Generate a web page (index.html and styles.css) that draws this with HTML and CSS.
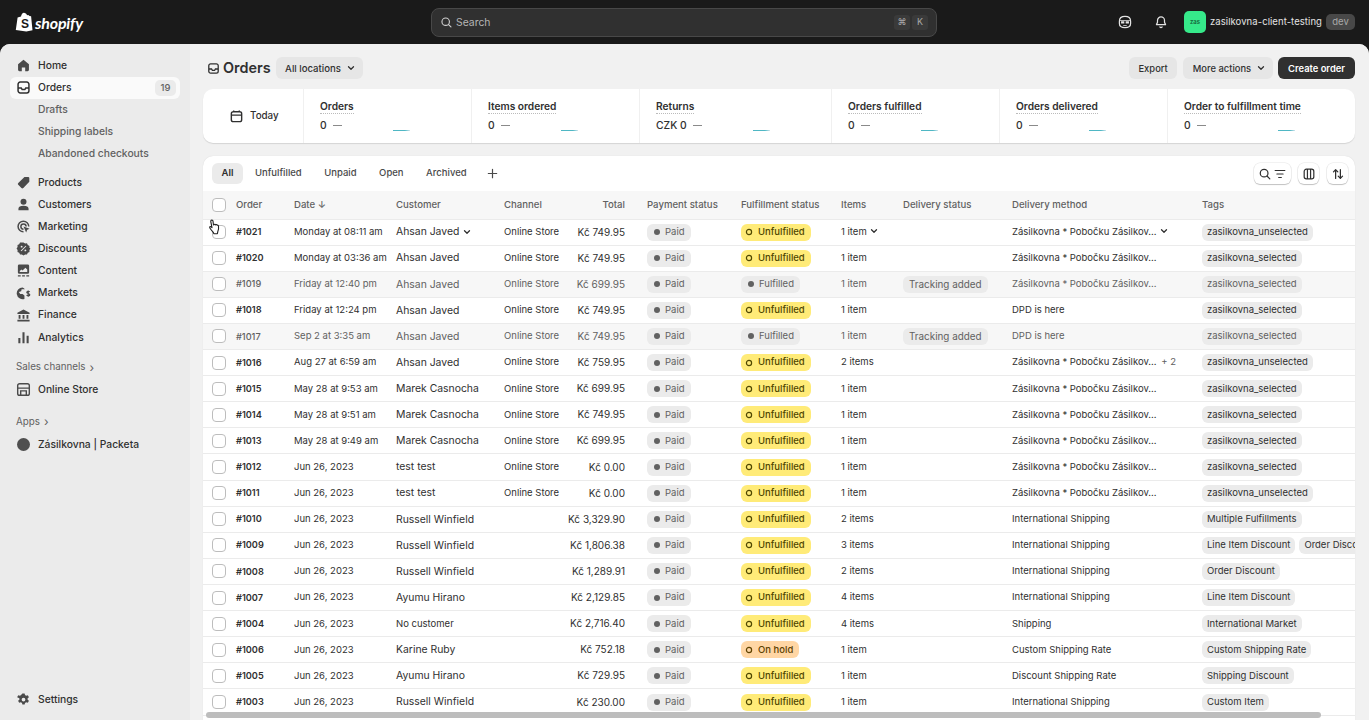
FILE: index.html
```html
<!DOCTYPE html>
<html lang="en">
<head>
<meta charset="utf-8">
<title>Orders</title>
<link rel="stylesheet" href="styles.css">
</head>
<body>
<svg class="defs" width="0" height="0" aria-hidden="true">
  <symbol id="i-inbox" viewBox="0 0 16 16"><path fill="none" stroke="currentColor" stroke-width="1.6" d="M4.5 2.2h7a2.3 2.3 0 0 1 2.3 2.3v7a2.3 2.3 0 0 1-2.3 2.3h-7a2.3 2.3 0 0 1-2.3-2.3v-7a2.3 2.3 0 0 1 2.3-2.3zM2.4 8.6h3.2l1 1.6h2.8l1-1.6h3.2"/></symbol>
  <symbol id="i-chev" viewBox="0 0 10 10"><path fill="none" stroke="currentColor" stroke-width="1.3" stroke-linecap="round" stroke-linejoin="round" d="M2.5 3.8 5 6.3l2.5-2.5"/></symbol>
  <symbol id="i-ring" viewBox="0 0 10 10"><circle cx="5" cy="5" r="2.6" fill="none" stroke="currentColor" stroke-width="1.2"/></symbol>
</svg>

<header class="topbar">
  <div class="brand">
    <svg class="bag" viewBox="0 0 18 20"><path fill="#fff" d="M2.600 5.400 6 4.400C6.400 2.400 7.600.8 9 .8c.5 0 .9.2 1.200.5 1 .1 1.500 1 1.800 1.900l1.100-.3.2 0 1.200 1.100 1.600.2 1.400 14-6.200 1.300L.8 18z"/><text x="6" y="15.500" class="bag-s">S</text></svg>
    <span class="wordmark">shopify</span>
  </div>
  <div class="search">
    <svg class="search-icon" viewBox="0 0 16 16"><circle cx="7" cy="7" r="4.600" fill="none" stroke="currentColor" stroke-width="1.400"/><path stroke="currentColor" stroke-width="1.400" stroke-linecap="round" d="m10.500 10.500 3 3"/></svg>
    <span class="search-label">Search</span>
    <span class="key">⌘</span><span class="key">K</span>
  </div>
  <div class="top-right">
    <svg class="top-icon" viewBox="0 0 16 16"><path fill="none" stroke="currentColor" stroke-width="1.400" d="M8 1.600c3.600 0 6.400 1.800 6.400 5.400v2.600c0 3-2.800 4.800-6.400 4.800s-6.400-1.800-6.400-4.800V7c0-3.600 2.800-5.400 6.400-5.400z"/><path fill="currentColor" d="M1.800 5.600h12.400v1.100H1.800zM3.500 7.200h3.700v2.600H3.500zM8.800 7.200h3.700v2.600H8.800zM6 11.300h4v1.100H6z"/></svg>
    <svg class="top-icon bell" viewBox="0 0 16 16"><path fill="none" stroke="currentColor" stroke-width="1.400" stroke-linejoin="round" d="M8 2.200a4 4 0 0 0-4 4v2.200L2.800 11h10.400L12 8.400V6.200a4 4 0 0 0-4-4zM6.400 13.200a1.700 1.700 0 0 0 3.200 0"/></svg>
    <span class="avatar">zas</span>
    <span class="store-name">zasilkovna-client-testing</span>
    <span class="dev">dev</span>
  </div>
</header>

<div class="frame">
  <nav class="sidebar">
    <a class="nav-item"><svg class="nav-icon" viewBox="0 0 16 16"><path fill="currentColor" d="M8 1.800 2.200 6.600v6a1.400 1.400 0 0 0 1.400 1.400h2.600v-4h3.600v4h2.600a1.400 1.400 0 0 0 1.400-1.400v-6z"/></svg>Home</a>
    <a class="nav-item active"><svg class="nav-icon dark"><use href="#i-inbox"/></svg>Orders<span class="count">19</span></a>
    <a class="nav-sub">Drafts</a>
    <a class="nav-sub">Shipping labels</a>
    <a class="nav-sub">Abandoned checkouts</a>
    <a class="nav-item gap"><svg class="nav-icon" viewBox="0 0 16 16"><path fill="currentColor" d="M9 2h4a1.200 1.200 0 0 1 1.200 1.200v4L7.800 13.800a1.400 1.400 0 0 1-2 0L2.400 10.400a1.400 1.400 0 0 1 0-2z"/></svg>Products</a>
    <a class="nav-item"><svg class="nav-icon" viewBox="0 0 16 16"><circle cx="8" cy="5" r="3.200" fill="currentColor"/><path fill="currentColor" d="M2.600 14v-1.400c0-2 2-3.200 5.400-3.200s5.400 1.200 5.400 3.200V14z"/></svg>Customers</a>
    <a class="nav-item"><svg class="nav-icon" viewBox="0 0 16 16"><path fill="none" stroke="currentColor" stroke-width="1.600" d="M13.600 8A5.700 5.700 0 1 0 8 13.700M10.800 8A2.800 2.800 0 1 0 8 10.800"/><path fill="currentColor" d="m8 8 6.500 2.300-2.500 1.200-1.200 2.800z"/></svg>Marketing</a>
    <a class="nav-item"><svg class="nav-icon" viewBox="0 0 16 16"><path fill="currentColor" fill-rule="evenodd" d="m8 1.500 1.700 1.100 2-.1.900 1.800 1.800.9-.1 2L15.400 8l-1.100 1.700.1 2-1.800.9-.9 1.800-2-.1L8 15.400l-1.700-1.100-2 .1-.9-1.800-1.800-.9.1-2L.6 8l1.100-1.700-.1-2 1.800-.9.9-1.800 2 .1zM6 5a1 1 0 1 0 0 2 1 1 0 0 0 0-2zm4 4a1 1 0 1 0 0 2 1 1 0 0 0 0-2zm.3-4L5 10.300l.8.7L11 5.700z"/></svg>Discounts</a>
    <a class="nav-item"><svg class="nav-icon" viewBox="0 0 16 16"><path fill="currentColor" fill-rule="evenodd" d="M3.500 1.500h9A1.500 1.500 0 0 1 14 3v7a1.500 1.500 0 0 1-1.500 1.500h-9A1.500 1.500 0 0 1 2 10V3a1.500 1.500 0 0 1 1.500-1.500zM4 8.500V9.500h8V7L10 5 7 8 5.800 7z"/><path fill="currentColor" d="M2 13h3v1.400H2zM6.500 13h3v1.400h-3zM11 13h3v1.400h-3z"/></svg>Content</a>
    <a class="nav-item"><svg class="nav-icon" viewBox="0 0 16 16"><path fill="currentColor" d="M7 1.500a6.300 6.300 0 1 0 2 12.300V10L7 8.500H4.500L3 6.500l2.500-1 .5-2h3.500A6.300 6.300 0 0 0 7 1.500z"/><path fill="none" stroke="currentColor" stroke-width="1.300" d="M14.500 6.500c-.5-1-2.800-1-3 .3-.2 1.400 3.200 1 3.200 2.600 0 1.300-2.700 1.400-3.400.2M13 4.800v6.600"/></svg>Markets</a>
    <a class="nav-item"><svg class="nav-icon" viewBox="0 0 16 16"><path fill="currentColor" d="M8 1.500 14.500 5v1.500h-13V5zM2.800 7.500h2v4h-2zM7 7.500h2v4H7zM11.200 7.500h2v4h-2zM1.500 12.500h13V14.500h-13z"/></svg>Finance</a>
    <a class="nav-item"><svg class="nav-icon" viewBox="0 0 16 16"><path fill="currentColor" d="M2.500 8.500h2.200V14H2.500zM6.900 2.500h2.200V14H6.900zM11.300 6h2.200v8h-2.200z"/></svg>Analytics</a>
    <div class="nav-head first">Sales channels <span class="caret">›</span></div>
    <a class="nav-item"><svg class="nav-icon" viewBox="0 0 16 16"><path fill="none" stroke="currentColor" stroke-width="1.500" d="M3.800 1.800h8.400a2 2 0 0 1 2 2v8.400a2 2 0 0 1-2 2H3.800a2 2 0 0 1-2-2V3.800a2 2 0 0 1 2-2zM2 6.500h12M5 14v-4.500h6V14"/></svg>Online Store</a>
    <div class="nav-head">Apps <span class="caret">›</span></div>
    <a class="nav-item"><span class="app-dot"></span>Zásilkovna | Packeta</a>
    <a class="nav-item settings"><svg class="nav-icon" viewBox="0 0 16 16"><path fill="currentColor" fill-rule="evenodd" d="M6.800 1.500h2.400l.4 1.800 1.200.7 1.800-.6 1.200 2.100-1.400 1.200v1.500l1.400 1.200-1.200 2.100-1.800-.6-1.200.7-.4 1.800H6.800l-.4-1.800-1.200-.7-1.800.6-1.200-2.100 1.400-1.200V6.700L1.200 5.500l1.200-2.100 1.800.6 1.200-.7zM8 6a2 2 0 1 0 0 4 2 2 0 0 0 0-4z"/></svg>Settings</a>
  </nav>

  <main class="content">
    <div class="page-head">
      <svg class="title-icon"><use href="#i-inbox"/></svg>
      <h1 class="title">Orders</h1>
      <button class="btn btn-grey loc">All locations <svg class="chev"><use href="#i-chev"/></svg></button>
      <span class="spacer"></span>
      <button class="btn btn-grey">Export</button>
      <button class="btn btn-grey more-btn">More actions <svg class="chev"><use href="#i-chev"/></svg></button>
      <button class="btn btn-dark">Create order</button>
    </div>

    <section class="stats">
      <div class="stat today">
        <svg class="cal" viewBox="0 0 16 16"><path fill="none" stroke="currentColor" stroke-width="1.500" d="M4.500 3h7A2 2 0 0 1 13.500 5v6.500a2 2 0 0 1-2 2h-7a2 2 0 0 1-2-2V5a2 2 0 0 1 2-2zM2.500 6.500h11M5 1.500V3M11 1.500V3"/></svg>
        <span>Today</span>
      </div>
      <div class="stat s168"><span class="stat-label">Orders</span><span class="stat-val">0 <i class="dash"></i></span><i class="spark"></i></div>
      <div class="stat s168"><span class="stat-label">Items ordered</span><span class="stat-val">0 <i class="dash"></i></span><i class="spark"></i></div>
      <div class="stat s192"><span class="stat-label">Returns</span><span class="stat-val">CZK 0 <i class="dash"></i></span><i class="spark"></i></div>
      <div class="stat s168"><span class="stat-label">Orders fulfilled</span><span class="stat-val">0 <i class="dash"></i></span><i class="spark"></i></div>
      <div class="stat s168"><span class="stat-label">Orders delivered</span><span class="stat-val">0 <i class="dash"></i></span><i class="spark"></i></div>
      <div class="stat s-last"><span class="stat-label">Order to fulfillment time</span><span class="stat-val">0 <i class="dash"></i></span><i class="spark"></i></div>
    </section>

    <section class="card">
      <div class="tabs">
        <span class="tab on">All</span>
        <span class="tab">Unfulfilled</span>
        <span class="tab">Unpaid</span>
        <span class="tab">Open</span>
        <span class="tab">Archived</span>
        <svg class="plus" viewBox="0 0 10 10"><path stroke="currentColor" stroke-width="1.100" stroke-linecap="round" d="M5 1.200v7.600M1.200 5h7.600"/></svg>
        <span class="spacer"></span>
        <span class="tool wide">
          <svg viewBox="0 0 16 16"><circle cx="7" cy="7" r="4.400" fill="none" stroke="currentColor" stroke-width="1.400"/><path stroke="currentColor" stroke-width="1.400" stroke-linecap="round" d="m10.300 10.300 3.200 3.200"/></svg>
          <svg viewBox="0 0 16 16"><path stroke="currentColor" stroke-width="1.400" stroke-linecap="round" d="M2.500 4h11M4.500 8h7M6.500 12h3"/></svg>
        </span>
        <span class="tool">
          <svg viewBox="0 0 16 16"><path fill="none" stroke="currentColor" stroke-width="1.400" d="M5 2.500h6A2.500 2.500 0 0 1 13.500 5v6a2.500 2.500 0 0 1-2.500 2.500H5A2.500 2.500 0 0 1 2.500 11V5A2.500 2.500 0 0 1 5 2.500zM6.200 2.500v11M9.800 2.500v11"/></svg>
        </span>
        <span class="tool">
          <svg viewBox="0 0 16 16"><path fill="none" stroke="currentColor" stroke-width="1.400" stroke-linecap="round" stroke-linejoin="round" d="M5.300 13V3M2.800 5.500l2.500-2.500 2.500 2.500M10.700 3v10M8.200 10.500l2.500 2.500 2.500-2.500"/></svg>
        </span>
      </div>

      <div class="row head">
        <span class="c-check"><i class="box"></i></span><span>Order</span><span>Date ↓</span><span>Customer</span><span>Channel</span><span class="total">Total</span><span>Payment status</span><span>Fulfillment status</span><span>Items</span><span>Delivery status</span><span>Delivery method</span><span>Tags</span>
      </div>

      <div class="row"><span class="c-check"><i class="box"></i></span><b>#1021</b><span>Monday at 08:11 am</span><span class="cust">Ahsan Javed <svg class="chev"><use href="#i-chev"/></svg></span><span>Online Store</span><span class="total">Kč 749.95</span><span><i class="pill grey"><i class="dot"></i>Paid</i></span><span><i class="pill yellow"><svg class="ring"><use href="#i-ring"/></svg>Unfulfilled</i></span><span>1 item <svg class="chev"><use href="#i-chev"/></svg></span><span></span><span>Zásilkovna * Pobočku Zásilkov... <svg class="chev"><use href="#i-chev"/></svg></span><span class="tags"><i class="tag">zasilkovna_unselected</i></span></div>

      <div class="row"><span class="c-check"><i class="box"></i></span><b>#1020</b><span>Monday at 03:36 am</span><span class="cust">Ahsan Javed</span><span>Online Store</span><span class="total">Kč 749.95</span><span><i class="pill grey"><i class="dot"></i>Paid</i></span><span><i class="pill yellow"><svg class="ring"><use href="#i-ring"/></svg>Unfulfilled</i></span><span>1 item</span><span></span><span>Zásilkovna * Pobočku Zásilkov...</span><span class="tags"><i class="tag">zasilkovna_selected</i></span></div>

      <div class="row muted"><span class="c-check"><i class="box"></i></span><b>#1019</b><span>Friday at 12:40 pm</span><span class="cust">Ahsan Javed</span><span>Online Store</span><span class="total">Kč 699.95</span><span><i class="pill grey"><i class="dot"></i>Paid</i></span><span><i class="pill grey"><i class="dot"></i>Fulfilled</i></span><span>1 item</span><span><i class="tag">Tracking added</i></span><span>Zásilkovna * Pobočku Zásilkov...</span><span class="tags"><i class="tag">zasilkovna_selected</i></span></div>

      <div class="row"><span class="c-check"><i class="box"></i></span><b>#1018</b><span>Friday at 12:24 pm</span><span class="cust">Ahsan Javed</span><span>Online Store</span><span class="total">Kč 749.95</span><span><i class="pill grey"><i class="dot"></i>Paid</i></span><span><i class="pill yellow"><svg class="ring"><use href="#i-ring"/></svg>Unfulfilled</i></span><span>1 item</span><span></span><span>DPD is here</span><span class="tags"><i class="tag">zasilkovna_selected</i></span></div>

      <div class="row muted"><span class="c-check"><i class="box"></i></span><b>#1017</b><span>Sep 2 at 3:35 am</span><span class="cust">Ahsan Javed</span><span>Online Store</span><span class="total">Kč 749.95</span><span><i class="pill grey"><i class="dot"></i>Paid</i></span><span><i class="pill grey"><i class="dot"></i>Fulfilled</i></span><span>1 item</span><span><i class="tag">Tracking added</i></span><span>DPD is here</span><span class="tags"><i class="tag">zasilkovna_selected</i></span></div>

      <div class="row"><span class="c-check"><i class="box"></i></span><b>#1016</b><span>Aug 27 at 6:59 am</span><span class="cust">Ahsan Javed</span><span>Online Store</span><span class="total">Kč 759.95</span><span><i class="pill grey"><i class="dot"></i>Paid</i></span><span><i class="pill yellow"><svg class="ring"><use href="#i-ring"/></svg>Unfulfilled</i></span><span>2 items</span><span></span><span>Zásilkovna * Pobočku Zásilkov... <i class="more">+ 2</i></span><span class="tags"><i class="tag">zasilkovna_unselected</i></span></div>

      <div class="row"><span class="c-check"><i class="box"></i></span><b>#1015</b><span>May 28 at 9:53 am</span><span class="cust">Marek Casnocha</span><span>Online Store</span><span class="total">Kč 699.95</span><span><i class="pill grey"><i class="dot"></i>Paid</i></span><span><i class="pill yellow"><svg class="ring"><use href="#i-ring"/></svg>Unfulfilled</i></span><span>1 item</span><span></span><span>Zásilkovna * Pobočku Zásilkov...</span><span class="tags"><i class="tag">zasilkovna_selected</i></span></div>

      <div class="row"><span class="c-check"><i class="box"></i></span><b>#1014</b><span>May 28 at 9:51 am</span><span class="cust">Marek Casnocha</span><span>Online Store</span><span class="total">Kč 749.95</span><span><i class="pill grey"><i class="dot"></i>Paid</i></span><span><i class="pill yellow"><svg class="ring"><use href="#i-ring"/></svg>Unfulfilled</i></span><span>1 item</span><span></span><span>Zásilkovna * Pobočku Zásilkov...</span><span class="tags"><i class="tag">zasilkovna_selected</i></span></div>

      <div class="row"><span class="c-check"><i class="box"></i></span><b>#1013</b><span>May 28 at 9:49 am</span><span class="cust">Marek Casnocha</span><span>Online Store</span><span class="total">Kč 699.95</span><span><i class="pill grey"><i class="dot"></i>Paid</i></span><span><i class="pill yellow"><svg class="ring"><use href="#i-ring"/></svg>Unfulfilled</i></span><span>1 item</span><span></span><span>Zásilkovna * Pobočku Zásilkov...</span><span class="tags"><i class="tag">zasilkovna_selected</i></span></div>

      <div class="row"><span class="c-check"><i class="box"></i></span><b>#1012</b><span>Jun 26, 2023</span><span class="cust">test test</span><span>Online Store</span><span class="total">Kč 0.00</span><span><i class="pill grey"><i class="dot"></i>Paid</i></span><span><i class="pill yellow"><svg class="ring"><use href="#i-ring"/></svg>Unfulfilled</i></span><span>1 item</span><span></span><span>Zásilkovna * Pobočku Zásilkov...</span><span class="tags"><i class="tag">zasilkovna_selected</i></span></div>

      <div class="row"><span class="c-check"><i class="box"></i></span><b>#1011</b><span>Jun 26, 2023</span><span class="cust">test test</span><span>Online Store</span><span class="total">Kč 0.00</span><span><i class="pill grey"><i class="dot"></i>Paid</i></span><span><i class="pill yellow"><svg class="ring"><use href="#i-ring"/></svg>Unfulfilled</i></span><span>1 item</span><span></span><span>Zásilkovna * Pobočku Zásilkov...</span><span class="tags"><i class="tag">zasilkovna_unselected</i></span></div>

      <div class="row"><span class="c-check"><i class="box"></i></span><b>#1010</b><span>Jun 26, 2023</span><span class="cust">Russell Winfield</span><span></span><span class="total">Kč 3,329.90</span><span><i class="pill grey"><i class="dot"></i>Paid</i></span><span><i class="pill yellow"><svg class="ring"><use href="#i-ring"/></svg>Unfulfilled</i></span><span>2 items</span><span></span><span>International Shipping</span><span class="tags"><i class="tag">Multiple Fulfillments</i></span></div>

      <div class="row"><span class="c-check"><i class="box"></i></span><b>#1009</b><span>Jun 26, 2023</span><span class="cust">Russell Winfield</span><span></span><span class="total">Kč 1,806.38</span><span><i class="pill grey"><i class="dot"></i>Paid</i></span><span><i class="pill yellow"><svg class="ring"><use href="#i-ring"/></svg>Unfulfilled</i></span><span>3 items</span><span></span><span>International Shipping</span><span class="tags"><i class="tag">Line Item Discount</i><i class="tag">Order Discount</i></span></div>

      <div class="row"><span class="c-check"><i class="box"></i></span><b>#1008</b><span>Jun 26, 2023</span><span class="cust">Russell Winfield</span><span></span><span class="total">Kč 1,289.91</span><span><i class="pill grey"><i class="dot"></i>Paid</i></span><span><i class="pill yellow"><svg class="ring"><use href="#i-ring"/></svg>Unfulfilled</i></span><span>2 items</span><span></span><span>International Shipping</span><span class="tags"><i class="tag">Order Discount</i></span></div>

      <div class="row"><span class="c-check"><i class="box"></i></span><b>#1007</b><span>Jun 26, 2023</span><span class="cust">Ayumu Hirano</span><span></span><span class="total">Kč 2,129.85</span><span><i class="pill grey"><i class="dot"></i>Paid</i></span><span><i class="pill yellow"><svg class="ring"><use href="#i-ring"/></svg>Unfulfilled</i></span><span>4 items</span><span></span><span>International Shipping</span><span class="tags"><i class="tag">Line Item Discount</i></span></div>

      <div class="row"><span class="c-check"><i class="box"></i></span><b>#1004</b><span>Jun 26, 2023</span><span>No customer</span><span></span><span class="total">Kč 2,716.40</span><span><i class="pill grey"><i class="dot"></i>Paid</i></span><span><i class="pill yellow"><svg class="ring"><use href="#i-ring"/></svg>Unfulfilled</i></span><span>4 items</span><span></span><span>Shipping</span><span class="tags"><i class="tag">International Market</i></span></div>

      <div class="row"><span class="c-check"><i class="box"></i></span><b>#1006</b><span>Jun 26, 2023</span><span class="cust">Karine Ruby</span><span></span><span class="total">Kč 752.18</span><span><i class="pill grey"><i class="dot"></i>Paid</i></span><span><i class="pill orange"><svg class="ring"><use href="#i-ring"/></svg>On hold</i></span><span>1 item</span><span></span><span>Custom Shipping Rate</span><span class="tags"><i class="tag">Custom Shipping Rate</i></span></div>

      <div class="row"><span class="c-check"><i class="box"></i></span><b>#1005</b><span>Jun 26, 2023</span><span class="cust">Ayumu Hirano</span><span></span><span class="total">Kč 729.95</span><span><i class="pill grey"><i class="dot"></i>Paid</i></span><span><i class="pill yellow"><svg class="ring"><use href="#i-ring"/></svg>Unfulfilled</i></span><span>1 item</span><span></span><span>Discount Shipping Rate</span><span class="tags"><i class="tag">Shipping Discount</i></span></div>

      <div class="row"><span class="c-check"><i class="box"></i></span><b>#1003</b><span>Jun 26, 2023</span><span class="cust">Russell Winfield</span><span></span><span class="total">Kč 230.00</span><span><i class="pill grey"><i class="dot"></i>Paid</i></span><span><i class="pill yellow"><svg class="ring"><use href="#i-ring"/></svg>Unfulfilled</i></span><span>1 item</span><span></span><span>International Shipping</span><span class="tags"><i class="tag">Custom Item</i></span></div>

      <i class="scrollbar"></i>
    </section>
  </main>
</div>

<svg class="cursor" viewBox="0 0 14 18"><path fill="#fff" stroke="#222" stroke-width="1.200" stroke-linejoin="round" d="M3.500 1.800c.8-.6 1.800 0 1.900 1l.5 4 .6-.2c.5-1 1.400-.6 1.600.1.500-.7 1.500-.4 1.600.4.600-.4 1.500-.1 1.600.8.300 2 0 4.500-.8 6.300l-.4 2H6.200l-.5-1.500C4.700 13.500 2.900 11.500 2 10c-.6-1 .4-1.900 1.300-1.200l1 .9-1.300-6.500c-.1-.5.100-1.100.5-1.400z"/></svg>
</body>
</html>
```
FILE: styles.css
```css
* { box-sizing: border-box; }
html, body { margin: 0; height: 720px; overflow: hidden; }
body {
  display: flex;
  flex-direction: column;
  background: #1a1a1a;
  font: 400 10.3px/1.3 Inter, "Liberation Sans", sans-serif;
  color: #303030;
}
.defs { position: absolute; }
i { font-style: normal; }
a { color: inherit; }
b { font-weight: 600; }
h1 { margin: 0; }

/* top bar */
.topbar { flex: 0 0 44px; display: flex; align-items: center; background: #1a1a1a; color: #e3e3e3; padding-left: 15px; }
.brand { display: flex; align-items: center; gap: 2px; width: 416px; flex: none; }
.bag { width: 18px; height: 20px; }
.bag-s { font: 700 12px "Liberation Sans", sans-serif; fill: #1a1a1a; }
.wordmark { font: italic 700 16px Lato, sans-serif; color: #fff; letter-spacing: -.2px; }
.search {
  width: 506px; height: 29px; flex: none; display: flex; align-items: center; gap: 1px;
  padding: 0 8px; background: #303030; border: 1px solid #484848; border-radius: 8px;
}
.search-icon { width: 13px; height: 13px; color: #d0d0d0; margin-right: 2px; }
.search-label { flex: 1; color: #b5b5b5; font-size: 10.4px; padding-top: 1px; }
.key { width: 16px; height: 15px; display: grid; place-items: center; background: #3a3a3a; border-radius: 3px; color: #a8a8a8; font-size: 9px; margin-left: 1px; }
.top-right { flex: 1; display: flex; align-items: center; padding-right: 14px; white-space: nowrap; }
.top-icon { width: 14px; height: 14px; color: #e3e3e3; margin-left: 181px; flex: none; }
.top-icon.bell { margin-left: 22px; }
.avatar { width: 22px; height: 22px; margin-left: 16px; background: #36e98a; color: #14613a; border-radius: 5px; display: grid; place-items: center; font-size: 6px; font-weight: 600; flex: none; }
.store-name { margin-left: 4px; color: #e3e3e3; font-size: 9.5px; letter-spacing: .07px; }
.dev { margin-left: auto; width: 29px; height: 16px; display: grid; place-items: center; background: #484848; color: #a8a8a8; border-radius: 5px; font-size: 9.5px; flex: none; }

/* frame */
.frame { flex: 1; min-height: 0; display: flex; background: #f1f1f1; border-radius: 10px 10px 0 0; overflow: hidden; }
.sidebar { flex: 0 0 190px; display: flex; flex-direction: column; background: #ebebeb; padding: 10.6px 10px 9.4px; }
.nav-item, .nav-sub { height: 22.1px; flex: none; display: flex; align-items: center; font-weight: 500; color: #303030; border-radius: 6px; }
.nav-item { padding-left: 6px; }
.nav-icon { width: 15px; height: 15px; margin-right: 7px; color: #4a4a4a; flex: none; }
.nav-icon.dark { color: #303030; }
.nav-sub { padding-left: 28px; color: #616161; }
.active { background: #fafafa; padding-right: 4px; }
.count { margin-left: auto; width: 21px; height: 16px; display: grid; place-items: center; border-radius: 5px; background: #ebebeb; color: #616161; font-size: 9.5px; }
.gap { margin-top: 6.5px; }
.nav-head { height: 22px; display: flex; align-items: center; gap: 4px; padding-left: 6px; color: #616161; font-size: 9.8px; margin-top: 10.9px; }
.nav-head.first { margin-top: 8.2px; }
.caret { font-size: 12px; line-height: 1; }
.app-dot { width: 13px; height: 13px; margin: 0 8px 0 1px; background: #4f4f4f; border-radius: 50%; flex: none; }
.settings { margin-top: auto; }

/* main */
.content { flex: 1; min-width: 0; display: flex; flex-direction: column; padding: 13px 14px 0 13px; background: #f1f1f1; }
.page-head { flex: none; height: 22px; display: flex; align-items: center; gap: 5px; }
.title-icon { width: 13px; height: 13px; margin-left: 4px; color: #303030; }
.title { font-size: 14.4px; font-weight: 600; color: #303030; margin-left: -2px; }
.spacer { flex: 1; }
.btn { height: 22px; padding: 0 9.5px; border: 0; border-radius: 6px; display: inline-flex; align-items: center; gap: 5px; font: 500 9.4px Inter, sans-serif; color: #303030; white-space: nowrap; }
.btn-grey { background: #e6e6e6; }
.btn-dark { background: #303030; color: #fff; font-weight: 600; padding: 0 10px; }
.more-btn { padding-right: 7px; margin-left: 1px; }
.loc { padding-right: 7px; font-size: 9.6px; }
.chev { width: 10px; height: 10px; vertical-align: -1.5px; color: #303030; flex: none; }

.stats { flex: none; margin-top: 10px; height: 54px; display: flex; background: #fff; border-radius: 10px; box-shadow: 0 1px 1px rgba(0,0,0,.12); overflow: hidden; }
.stat { position: relative; display: flex; flex-direction: column; padding: 10px 16px 0; border-right: 1px solid #f0f0f0; }
.today { width: 101px; flex-direction: row; align-items: center; gap: 6px; padding: 0 0 0 26px; font-weight: 500; font-size: 9.8px; }
.cal { width: 15px; height: 15px; }
.s168 { width: 168px; }
.s192 { width: 192px; }
.s-last { flex: 1; border-right: 0; }
.stat-label { align-self: flex-start; font-weight: 600; font-size: 10.2px; border-bottom: 1px dotted #bbb; line-height: 14px; }
.stat-val { font-weight: 500; margin-top: 5px; font-size: 10.3px; }
.dash { display: inline-block; width: 9px; height: 1px; background: #8a8a8a; vertical-align: 3px; margin-left: 4px; }
.spark { position: absolute; left: 89px; top: 41px; width: 17px; height: 1px; background: linear-gradient(90deg, #4fb7c4 70%, #cfe4ec); }
.s192 .spark { left: 113px; }
.s-last .spark { left: 110px; }

.card { flex: 1; min-height: 0; position: relative; margin-top: 13px; background: #fff; border-radius: 10px 10px 0 0; overflow: hidden; box-shadow: 0 0 1px rgba(0,0,0,.15); }
.tabs { height: 35px; display: flex; align-items: center; padding: 0 7px 0 9px; color: #4a4a4a; font-weight: 500; }
.tab { height: 21px; display: flex; align-items: center; padding: 0 9px; margin-right: 4.5px; border-radius: 6px; font-size: 9.5px; }
.tab:first-child { margin-right: 3px; width: 31px; justify-content: center; padding: 0; }
.tab.on { background: #ebebeb; color: #303030; font-weight: 600; }
.plus { width: 11px; height: 11px; margin-left: 7px; color: #4a4a4a; }
.tool { width: 21px; height: 21px; margin-left: 8px; display: flex; align-items: center; justify-content: center; gap: 1px; background: #fff; border-radius: 6px; box-shadow: 0 0 0 .5px rgba(0,0,0,.1), 0 1px 1px rgba(0,0,0,.2); color: #303030; }
.tool.wide { width: 37px; margin-right: -1px; }
.tool svg { width: 14px; height: 14px; }

.row {
  display: grid;
  grid-template-columns: 33px 58px 102px 108px 62px 81px 94px 100px 62px 109px 190px 153px;
  height: 26.12px;
  align-items: center;
  border-bottom: 1px solid #ebebeb;
  white-space: nowrap;
  color: #303030;
  font-size: 9.5px;
}
.row.head { height: 28.5px; padding-top: 1px; background: #f7f7f7; color: #616161; font-weight: 500; font-size: 9.6px; }
.row.muted { background: #f7f7f7; color: #616161; }
.row.muted b { font-weight: 500; }
.row > span, .row > b { min-width: 0; }
.row > b { font-size: 9.2px; }
.c-check { display: flex; padding-left: 9px; }
.box { width: 14px; height: 14px; border: 1.2px solid #bdbdbd; border-radius: 4px; background: #fff; }
.total { text-align: right; padding-right: 22px; font-size: 10px; }
.row.head .total { font-size: 9.6px; }
.cust { font-size: 10.4px; }
.pill, .tag { display: inline-flex; align-items: center; height: 17px; border-radius: 6px; font-size: 9.5px; }
.pill { padding: 0 6px 0 5px; }
.pill.grey { background: #ebebeb; color: #616161; }
.pill.yellow { background: #ffeb78; color: #4f4700; font-weight: 500; padding: 0 6px 0 3px; }
.pill.orange { background: #ffd6a4; color: #5e4200; font-weight: 500; padding: 0 6px 0 3px; }
.dot { width: 6px; height: 6px; border-radius: 50%; background: #616161; margin: 0 5px 0 2px; flex: none; }
.ring { width: 10px; height: 10px; margin-right: 4px; flex: none; }
.tag { padding: 0 5px; background: #ebebeb; color: #303030; }
.row.muted .tag { color: #616161; }
.row.muted span:not(.tags) > .tag { padding: 0 6px; font-size: 9.9px; }
.tags { display: flex; gap: 4px; overflow: hidden; }
.tags .tag { flex: none; }
.more { margin-left: 2px; color: #616161; }
.scrollbar { position: absolute; left: 3px; right: 34px; bottom: 2px; height: 6px; background: #bdbdbd; border-radius: 3px; }
.cursor { position: absolute; left: 208px; top: 218px; width: 13px; height: 18px; }
```
